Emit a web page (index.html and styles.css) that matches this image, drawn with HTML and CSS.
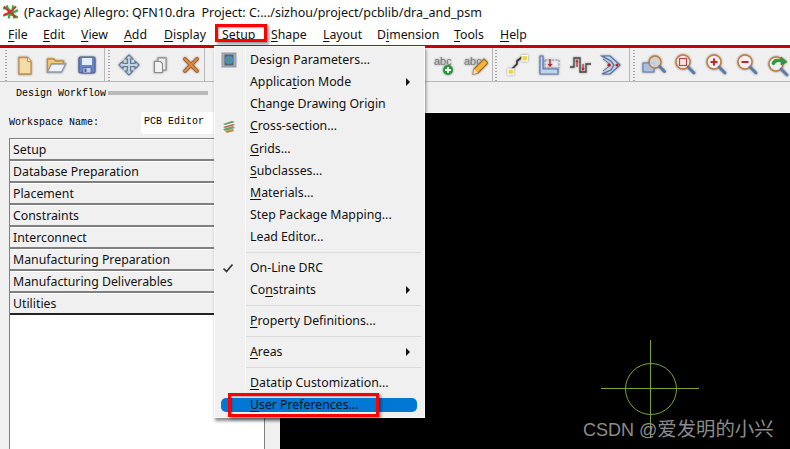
FILE: index.html
```html
<!DOCTYPE html>
<html lang="en">
<head>
<meta charset="utf-8">
<title>Allegro</title>
<link rel="stylesheet" href="styles.css">
</head>
<body>
<div class="app">
  <header class="titlebar">
    <svg class="appicon" viewBox="0 0 16 14"><path d="M0 3h5l3 3 4 1 4-2M0 11l6-2 4 1 6 3M4 0l2 6 1 4-1 4M11 0l-1 6 1 4 1 4" fill="none" stroke="#35b040" stroke-width="2.400"/><path d="M1 1l5 5 4 3 4 4M1 10l5-2 4-3 4-4" fill="none" stroke="#e0262a" stroke-width="2"/></svg>
    <span>(Package) Allegro: QFN10.dra&nbsp;&nbsp;Project: C:.../sizhou/project/pcblib/dra_and_psm</span>
  </header>
  <nav class="menubar">
    <span class="m m-file"><u>F</u>ile</span>
    <span class="m m-edit"><u>E</u>dit</span>
    <span class="m m-view"><u>V</u>iew</span>
    <span class="m m-add"><u>A</u>dd</span>
    <span class="m m-display"><u>D</u>isplay</span>
    <span class="m m-setup">Setup</span>
    <span class="m m-shape"><u>S</u>hape</span>
    <span class="m m-layout"><u>L</u>ayout</span>
    <span class="m m-dim">D<u>i</u>mension</span>
    <span class="m m-tools"><u>T</u>ools</span>
    <span class="m"><u>H</u>elp</span>
  </nav>
  <div class="redline"></div>
  <div class="toolbar">
    <div class="tb-group tb-a">
      <svg class="ico" viewBox="0 0 24 24"><path d="M6 4.500h8.500l3.500 4v12.500H6z" fill="#f3dca6" stroke="#c98a45" stroke-width="1.300"/><path d="M14.500 4.500v4h3.500" fill="#fff6dd" stroke="#c98a45"/></svg>
      <svg class="ico" viewBox="0 0 24 24"><path d="M3.500 19V6h6l2 2h8v3h-12l-3 8z" fill="#f2c77e" stroke="#c98a3c" stroke-width="1.300"/><path d="M3.500 19l4-8h14l-4 8z" fill="#eef2f6" stroke="#8e99ab" stroke-width="1.300"/></svg>
      <svg class="ico" viewBox="0 0 24 24"><rect x="4" y="4" width="16" height="16" rx="1.500" fill="#6a86bf" stroke="#4a5d99" stroke-width="1.200"/><rect x="7" y="5" width="10" height="7" fill="#e6ecf7"/><rect x="8" y="14.500" width="8" height="5.500" fill="#c7d3e8" stroke="#4a5d99" stroke-width=".8"/><rect x="9.500" y="15.500" width="2" height="3.500" fill="#4a5d99"/></svg>
    </div>
    <div class="tb-group tb-b">
      <svg class="ico" viewBox="0 0 24 24"><path d="M12 2l4 4h-2.500v4.500H18V8l4 4-4 4v-2.500h-4.500V18H16l-4 4-4-4h2.500v-4.500H6V16l-4-4 4-4v2.500h4.500V6H8z" fill="#c3d4e4" stroke="#5f7d9e" stroke-width="1.100"/></svg>
      <svg class="ico" viewBox="0 0 24 24"><rect x="10" y="5" width="8" height="12" fill="#eeeeee" stroke="#8a8a8a" stroke-width="1.100"/><path d="M6.500 8.500h6l2 2v9h-8z" fill="#f2f2f2" stroke="#8a8a8a" stroke-width="1.100"/></svg>
      <svg class="ico" viewBox="0 0 24 24"><path d="M6 6l12 12M18 6L6 18" stroke="#9a5826" stroke-width="3.800" stroke-linecap="round"/><path d="M6 6l12 12M18 6L6 18" stroke="#e08a3c" stroke-width="2" stroke-linecap="round"/></svg>
    </div>
    <div class="tb-group tb-c">
      <svg class="ico" viewBox="0 0 24 24"><text x="1" y="12" class="abc">abc</text><circle cx="15" cy="17" r="5" fill="#1f9a35"/><path d="M15 14v6M12 17h6" stroke="#fff" stroke-width="1.800"/></svg>
      <svg class="ico" viewBox="0 0 24 24"><text x="0" y="12" class="abc">abc</text><path d="M9 21l1-5L20 6l4 4-10 10z" fill="#f1b53a" stroke="#a9651d" stroke-width="1.100"/><path d="M9 21l1-5 4 4z" fill="#f6e0b0"/></svg>
    </div>
    <div class="tb-group tb-d">
      <svg class="ico" viewBox="0 0 24 24"><path d="M6 19v-3l5-5V8l5-4h2" fill="none" stroke="#333" stroke-width="1.700"/><rect x="2" y="16" width="5.500" height="5.500" fill="#f0d43a" stroke="#fff" stroke-width="1.200"/><rect x="16" y="2.500" width="5.500" height="5.500" fill="#f0d43a" stroke="#fff" stroke-width="1.200"/></svg>
      <svg class="ico" viewBox="0 0 24 24"><path d="M3 3h3v13h15v5H3z" fill="#c3d4ea" stroke="#5a78b0" stroke-width="1.200"/><path d="M8 7h14v8H8z" fill="none" stroke="#7a93bd" stroke-dasharray="2 1.500"/><path d="M13 6v6" stroke="#c0272d" stroke-width="1.300"/><path d="M10.500 11h5L13 14z" fill="#c0272d"/></svg>
      <svg class="ico" viewBox="0 0 24 24"><path d="M2 14h4V5h6v14h6v-8h5" fill="none" stroke="#444" stroke-width="1.300"/><path d="M9 14V8M15 11v6" stroke="#c0272d" stroke-width="1.200"/><path d="M7.500 9L9 6l1.500 3zM13.500 15l1.500 3 1.500-3z" fill="#c0272d"/></svg>
      <svg class="ico" viewBox="0 0 24 24"><path d="M3 3h8l10 9-10 9H3l9-4 3-5-3-4z" fill="#c3d4ea" stroke="#4f70aa" stroke-width="1.200"/><path d="M4 6l8 6-8 6" fill="none" stroke="#4f70aa"/><circle cx="10" cy="12" r="1.600" fill="#c0272d"/><circle cx="18" cy="12" r="1.600" fill="#c0272d"/></svg>
    </div>
    <div class="tb-group tb-e">
      <svg class="ico" viewBox="0 0 24 24"><rect x="1" y="10" width="11" height="9" fill="#a9c0df" stroke="#5a78b0"/><circle cx="13" cy="9" r="6" fill="#dfe7f0" fill-opacity=".7" stroke="#c47a3a" stroke-width="1.500"/><path d="M17.500 13.500l5 5" stroke="#5a7aa8" stroke-width="2.800" stroke-linecap="round"/></svg>
      <svg class="ico" viewBox="0 0 24 24"><circle cx="10" cy="9" r="7" fill="#efeff2" stroke="#c47a3a" stroke-width="1.500"/><rect x="6.500" y="5.500" width="7" height="7" fill="#f4e4e4" stroke="#b7484a" stroke-width="1.200"/><path d="M15 14l6 6" stroke="#5a7aa8" stroke-width="2.800" stroke-linecap="round"/></svg>
      <svg class="ico" viewBox="0 0 24 24"><circle cx="10" cy="9" r="7" fill="#efeff2" stroke="#c47a3a" stroke-width="1.500"/><path d="M10 5.500v7M6.500 9h7" stroke="#c0272d" stroke-width="2"/><path d="M15 14l6 6" stroke="#5a7aa8" stroke-width="2.800" stroke-linecap="round"/></svg>
      <svg class="ico" viewBox="0 0 24 24"><circle cx="10" cy="9" r="7" fill="#efeff2" stroke="#c47a3a" stroke-width="1.500"/><path d="M6.500 9h7" stroke="#c0272d" stroke-width="2"/><path d="M15 14l6 6" stroke="#5a7aa8" stroke-width="2.800" stroke-linecap="round"/></svg>
      <svg class="ico" viewBox="0 0 24 24"><circle cx="10" cy="11" r="7" fill="#efeff2" stroke="#c47a3a" stroke-width="1.500"/><path d="M6 11c0-4 4-6 9-4V4l6 5-6 3V9c-3-1-6 0-7 3z" fill="#2f9a3c" stroke="#1c7a2c" stroke-width=".6"/><path d="M15 16l6 6" stroke="#5a7aa8" stroke-width="2.800" stroke-linecap="round"/></svg>
    </div>
  </div>
  <main class="workarea">
    <aside class="sidebar">
      <div class="wf-head"><span class="mono">Design Workflow</span><span class="wf-rule"></span></div>
      <div class="wf-space">
        <span class="mono wf-label">Workspace Name:</span>
        <span class="mono wf-input">PCB Editor</span>
      </div>
      <div class="stack">
        <div class="row">Setup</div>
        <div class="row">Database Preparation</div>
        <div class="row">Placement</div>
        <div class="row">Constraints</div>
        <div class="row">Interconnect</div>
        <div class="row">Manufacturing Preparation</div>
        <div class="row">Manufacturing Deliverables</div>
        <div class="row row-last">Utilities</div>
        <div class="list"></div>
      </div>
    </aside>
    <section class="right">
      <div class="strip"></div>
      <div class="canvas">
        <svg class="cross" viewBox="0 0 100 100"><circle cx="50" cy="50" r="25.500" fill="none" stroke="#7aa42f"/><path d="M0 49.500h98M49.500 1v98" stroke="#7aa42f"/></svg>
        <div class="wm">CSDN @<span class="wm-cjk">爱发明的小兴</span></div>
      </div>
    </section>
  </main>

  <div class="menu">
    <div class="item"><svg class="mi" viewBox="0 0 16 16"><rect x="1" y="1" width="14" height="14" fill="#a7adb5" stroke="#8f97a1"/><rect x="3.500" y="2.500" width="9" height="11" fill="#59636f"/><circle cx="8" cy="8" r="4" fill="#4a8fc7"/><path d="M6 5.500l3 .5 1 3-3 1.500z" fill="#4aa05a"/></svg>Design Parameters...</div>
    <div class="item">Applica<u>t</u>ion Mode<i class="arrow"></i></div>
    <div class="item">C<u>h</u>ange Drawing Origin</div>
    <div class="item"><svg class="mi" viewBox="0 0 16 16"><path d="M2 6l9-3 3 1-10 3z" fill="#5f9a5f"/><path d="M2 9l10-3 2 1-10 3z" fill="#c2604e"/><path d="M2 11l10-3 2 2-10 3z" fill="#6aa566"/><path d="M4 13l8-2 1 2-7 2z" fill="#b58a4a"/></svg><u>C</u>ross-section...</div>
    <div class="item"><u>G</u>rids...</div>
    <div class="item"><u>S</u>ubclasses...</div>
    <div class="item"><u>M</u>aterials...</div>
    <div class="item">Step Package Mapping...</div>
    <div class="item">Lead Editor...</div>
    <div class="sep"></div>
    <div class="item"><svg class="mi mi-check" viewBox="0 0 12 12"><path d="M1.500 6.500l3 3 6-7" fill="none" stroke="#333" stroke-width="1.700"/></svg>On-Line DRC</div>
    <div class="item">Co<u>n</u>straints<i class="arrow"></i></div>
    <div class="sep"></div>
    <div class="item"><u>P</u>roperty Definitions...</div>
    <div class="sep"></div>
    <div class="item"><u>A</u>reas<i class="arrow"></i></div>
    <div class="sep"></div>
    <div class="item"><u>D</u>atatip Customization...</div>
    <div class="item item-sel"><u>U</u>ser Preferences...</div>
  </div>
  <div class="mark mark-setup"></div>
  <div class="mark mark-user"></div>
</div>
</body>
</html>
```

FILE: styles.css
```css
* { box-sizing: border-box; }
html, body { margin: 0; height: 100%; }
body { background: #fff; font-family: "Noto Sans", "Open Sans", sans-serif; font-size: 12.3px; color: #111; overflow: hidden; }
.app { position: relative; width: 790px; height: 449px; display: flex; flex-direction: column; overflow: hidden; }
u { text-underline-offset: 2px; text-decoration-thickness: 1px; }

.titlebar { height: 22px; display: flex; align-items: center; padding: 2px 0 0 3px; gap: 6px; flex: none; font-size: 12.5px; }
.appicon { width: 15px; height: 14px; flex: none; }

.menubar { height: 23px; display: flex; align-items: center; padding: 1px 0 0 8px; flex: none; }
.m-file { width: 35px; } .m-edit { width: 38px; } .m-view { width: 43px; } .m-add { width: 40px; }
.m-display { width: 58px; } .m-setup { width: 49px; } .m-shape { width: 52px; } .m-layout { width: 54px; }
.m-dim { width: 77px; } .m-tools { width: 46px; }

.redline { height: 3px; background: #c80000; flex: none; }

.toolbar { height: 34px; flex: none; display: flex; background: #f0f0f0; border-bottom: 1px solid #b8b8b8; }
.tb-group { display: flex; align-items: center; gap: 7px; border-right: 1px solid #b8b8b8; background-image: radial-gradient(#a4a4a4 45%, transparent 50%); background-size: 2px 3px; background-repeat: repeat-y; background-origin: border-box; }
.tb-a { padding-left: 13px; width: 105px; background-position: 5px 4px; }
.tb-b { padding-left: 12px; width: 100px; background-position: 3px 4px; }
.tb-c { margin-left: 228px; width: 60px; background-image: none; }
.tb-d { padding-left: 13px; width: 137px; background-position: 2px 4px; }
.tb-e { padding-left: 12px; border-right: 0; background-position: 3px 4px; }
.ico { width: 24px; height: 24px; flex: none; filter: drop-shadow(0 0 1.2px rgba(0,0,0,.45)); }
.abc { font: 11px "Liberation Sans", sans-serif; fill: #777; }

.workarea { flex: 1; display: flex; min-height: 0; }
.sidebar { width: 280px; flex: none; background: #f0f0f0; display: flex; flex-direction: column; padding-left: 9px; }
.mono { font-family: "Liberation Mono", monospace; font-size: 10px; color: #000; }
.wf-head { height: 22px; display: flex; align-items: center; padding-left: 7px; gap: 2px; }
.wf-rule { width: 100px; height: 4px; background: #b9b9b9; }
.wf-space { height: 34px; display: flex; align-items: center; padding-top: 4px; }
.wf-label { width: 132px; padding-bottom: 1px; }
.wf-input { flex: 1; height: 22px; background: #fff; border-radius: 3px; padding: 4px 0 0 3px; }
.stack { flex: 1; width: 256px; border: 1px solid #808080; border-bottom: 0; display: flex; flex-direction: column; }
.row { height: 22px; flex: none; background: #f0f0f0; border-top: 1px solid #fff; border-bottom: 2px solid #808080; padding-left: 3px; line-height: 19px; }
.row-last { border-bottom: 2px solid #222; }
.list { flex: 1; background: #fff; }

.right { flex: 1; display: flex; flex-direction: column; }
.strip { height: 31px; background: #f0f0f0; border-bottom: 1px solid #fafafa; flex: none; }
.canvas { flex: 1; background: #000; position: relative; overflow: hidden; }
.cross { position: absolute; left: 321px; top: 226px; width: 100px; height: 100px; }
.wm { position: absolute; left: 303px; top: 303px; font: 18px "Liberation Sans", "Noto Sans CJK SC", sans-serif; color: #8c8c8c; white-space: nowrap; line-height: 26px; }
.wm-cjk { font-size: 19.4px; }

.menu { position: absolute; left: 214px; top: 46px; width: 211px; height: 372px; padding: 2.12px 0 0; background: linear-gradient(#fafafa, #fafafa) 30px 0 / 1px 100% no-repeat, #f0f0f0; border: 1px solid #fbfbfb; box-shadow: 1px 3px 3px rgba(0,0,0,.45); }
.item { position: relative; height: 22.125px; padding-left: 35px; line-height: 22px; white-space: nowrap; }
.mi { position: absolute; left: 6px; top: 3px; width: 16px; height: 16px; }
.mi-check { left: 7px; top: 5px; width: 12px; height: 12px; }
.arrow { position: absolute; left: 191px; top: 7px; border-left: 4px solid #111; border-top: 4px solid transparent; border-bottom: 4px solid transparent; }
.sep { height: 8.8px; margin: 0 3px 0 31px; background: linear-gradient(#dadada, #dadada) 0 4px / 100% 1px no-repeat; }
.item-sel { z-index: 0; }
.item-sel::before { content: ""; position: absolute; left: 6px; right: 7px; top: 4px; bottom: 4px; background: #0078d4; border-radius: 5px; z-index: -1; }

.mark { position: absolute; border: 3px solid #f00; box-shadow: 2px 2px 3px rgba(0,0,0,.45), inset 1px 1px 2px rgba(0,0,0,.35); }
.mark-setup { left: 215px; top: 24px; width: 52px; height: 18px; }
.mark-user { left: 228px; top: 393px; width: 151px; height: 24px; }
```
